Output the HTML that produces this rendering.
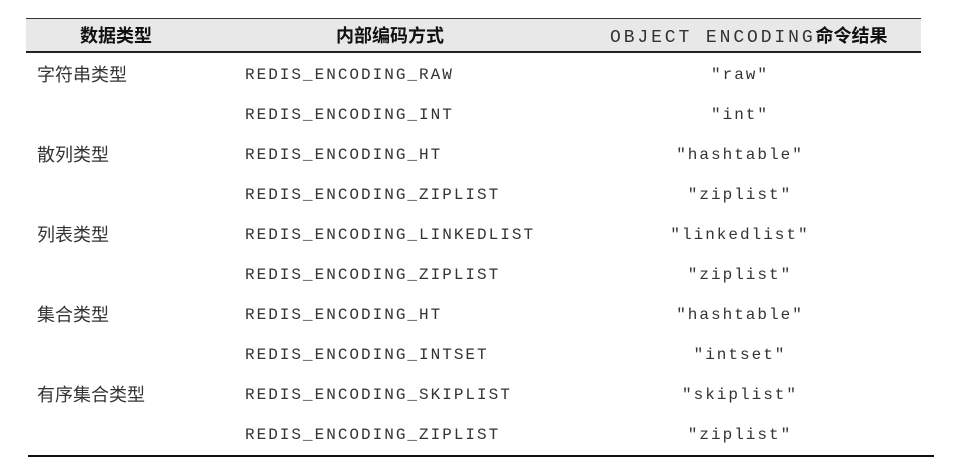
<!DOCTYPE html>
<html><head><meta charset="utf-8"><style>
body{margin:0;width:962px;height:472px;background:#fff;position:relative;overflow:hidden;font-family:"Liberation Sans","Noto Sans CJK SC",sans-serif;color:#222}
.hd{position:absolute;left:26px;top:18px;width:895px;height:35px;background:#e8e8e8;border-top:1px solid #333;border-bottom:2px solid #222;box-sizing:border-box}
.t{position:absolute;white-space:nowrap;line-height:20px}
.b{font-weight:bold;font-size:18px;color:#111}
.cn{font-size:18px;color:#333;left:37px}
.m{font-family:"Liberation Mono","DejaVu Sans Mono","Courier New",monospace;font-size:16px;letter-spacing:2px;color:#333}
.c2{left:245px}
.c3{left:600px;width:280px;text-align:center}
</style></head><body>
<div class="hd"></div>
<div class="t b" style="left:80px;top:26px">数据类型</div>
<div class="t b" style="left:336px;top:26px">内部编码方式</div>
<div class="t" style="left:610px;top:26px"><span class="m" style="font-size:18px;letter-spacing:2.9px">OBJECT ENCODING</span><span class="b">命令结果</span></div>
<div class="t cn" style="top:65px">字符串类型</div>
<div class="t cn" style="top:145px">散列类型</div>
<div class="t cn" style="top:225px">列表类型</div>
<div class="t cn" style="top:305px">集合类型</div>
<div class="t cn" style="top:385px">有序集合类型</div>
<div class="t m c2" style="top:65px">REDIS_ENCODING_RAW</div><div class="t m c3" style="top:65px">"raw"</div>
<div class="t m c2" style="top:105px">REDIS_ENCODING_INT</div><div class="t m c3" style="top:105px">"int"</div>
<div class="t m c2" style="top:145px">REDIS_ENCODING_HT</div><div class="t m c3" style="top:145px">"hashtable"</div>
<div class="t m c2" style="top:185px">REDIS_ENCODING_ZIPLIST</div><div class="t m c3" style="top:185px">"ziplist"</div>
<div class="t m c2" style="top:225px">REDIS_ENCODING_LINKEDLIST</div><div class="t m c3" style="top:225px">"linkedlist"</div>
<div class="t m c2" style="top:265px">REDIS_ENCODING_ZIPLIST</div><div class="t m c3" style="top:265px">"ziplist"</div>
<div class="t m c2" style="top:305px">REDIS_ENCODING_HT</div><div class="t m c3" style="top:305px">"hashtable"</div>
<div class="t m c2" style="top:345px">REDIS_ENCODING_INTSET</div><div class="t m c3" style="top:345px">"intset"</div>
<div class="t m c2" style="top:385px">REDIS_ENCODING_SKIPLIST</div><div class="t m c3" style="top:385px">"skiplist"</div>
<div class="t m c2" style="top:425px">REDIS_ENCODING_ZIPLIST</div><div class="t m c3" style="top:425px">"ziplist"</div>
<div style="position:absolute;left:28px;top:455px;width:906px;height:2px;background:#111"></div>
</body></html>
